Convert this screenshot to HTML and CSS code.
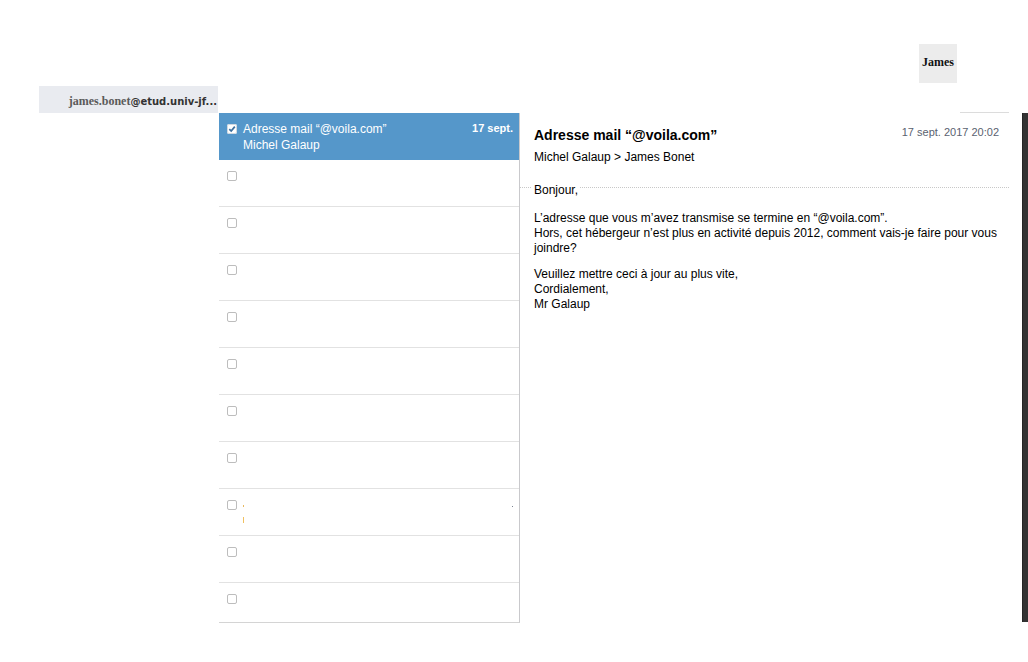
FILE: index.html
```html
<!DOCTYPE html>
<html lang="fr">
<head>
<meta charset="utf-8">
<title>Messagerie</title>
<link rel="stylesheet" href="styles.css">
</head>
<body>
<div class="app">
  <header class="topbar">
    <div class="user-badge">James</div>
  </header>
  <div class="account-row">
    <div class="account"><span class="acc-name">james.bonet</span><span class="acc-domain">@etud.univ-jf...</span></div>
    <div class="top-rule"></div>
  </div>
  <main class="main">
    <div class="gutter"></div>
    <section class="list">
      <div class="row selected">
        <span class="check checked"><svg width="10" height="10" viewBox="0 0 10 10"><rect x="0.5" y="0.5" width="9" height="9" rx="1.5" fill="#fff" stroke="#d0d8e0"/><path d="M2.3 5.2 L4.2 7.1 L7.8 2.6" fill="none" stroke="#3d6f9e" stroke-width="1.7"/></svg></span>
        <div class="row-text">
          <div class="subject">Adresse mail “@voila.com”</div>
          <div class="from">Michel Galaup</div>
        </div>
        <div class="row-date">17 sept.</div>
      </div>
      <div class="row"><span class="check"></span></div>
      <div class="row"><span class="check"></span></div>
      <div class="row"><span class="check"></span></div>
      <div class="row"><span class="check"></span></div>
      <div class="row"><span class="check"></span></div>
      <div class="row"><span class="check"></span></div>
      <div class="row"><span class="check"></span></div>
      <div class="row"><span class="check"></span><div class="row-text"><div class="marks"><span class="dot"></span><span class="grey-dot"></span></div><div class="marks"><span class="bar"></span></div></div></div>
      <div class="row"><span class="check"></span></div>
      <div class="row"><span class="check"></span></div>
    </section>
    <article class="reader">
      <div class="reader-head">
        <h1 class="title">Adresse mail “@voila.com”</h1>
        <div class="date">17 sept. 2017 20:02</div>
      </div>
      <div class="people">Michel Galaup &gt; James Bonet</div>
      <fieldset class="body">
        <legend>Bonjour,</legend>
        <p class="first">L’adresse que vous m’avez transmise se termine en “@voila.com”.<br>Hors, cet hébergeur n’est plus en activité depuis 2012, comment vais-je faire pour vous joindre?</p>
        <p>Veuillez mettre ceci à jour au plus vite,<br>Cordialement,<br>Mr Galaup</p>
      </fieldset>
    </article>
    <div class="scrollbar"></div>
  </main>
</div>
</body>
</html>
```

FILE: styles.css
```css
html, body {
  margin: 0;
  padding: 0;
  background: #fff;
}
body {
  width: 1028px;
  height: 662px;
  overflow: hidden;
  font-family: "Liberation Sans", Arial, sans-serif;
  color: #000;
}
.topbar {
  height: 86px;
  box-sizing: border-box;
  padding: 44px 71px 0 0;
  display: flex;
  justify-content: flex-end;
}
.user-badge {
  width: 38px;
  height: 39px;
  background: #ececec;
  font-family: "Liberation Serif", "Times New Roman", serif;
  font-weight: bold;
  font-size: 12px;
  display: flex;
  align-items: center;
  justify-content: center;
  padding-bottom: 2px;
  box-sizing: border-box;
  color: #111;
}
.account-row {
  height: 27px;
  display: flex;
}
.account {
  margin-left: 39px;
  width: 179px;
  height: 27px;
  background: #e9ebf0;
  display: flex;
  align-items: center;
  justify-content: flex-end;
  padding-top: 3px;
  box-sizing: border-box;
  white-space: nowrap;
}
.acc-name {
  font-family: "Liberation Serif", "Times New Roman", serif;
  font-weight: bold;
  font-size: 12px;
  color: #5a5a5a;
}
.acc-domain {
  font-family: "DejaVu Sans", Verdana, sans-serif;
  font-weight: bold;
  font-size: 10px;
  color: #333;
  margin-right: 1px;
}
.top-rule {
  margin-left: auto;
  margin-right: 19px;
  width: 49px;
  height: 1px;
  background: #dcdcdc;
  align-self: flex-end;
}
.main {
  display: flex;
  height: 510px;
}
.gutter {
  width: 219px;
  flex: none;
}
.list {
  width: 300px;
  flex: none;
  border-right: 1px solid #c9c9cc;
  border-bottom: 1px solid #d4d4d4;
  overflow: hidden;
  box-sizing: content-box;
  height: 509px;
}
.row {
  height: 47px;
  box-sizing: border-box;
  border-bottom: 1px solid #e2e2e2;
  display: flex;
  align-items: flex-start;
  padding: 11px 6px 0 8px;
}
.row .check {
  width: 10px;
  height: 10px;
  box-sizing: border-box;
  border: 1px solid #bdbdbd;
  border-radius: 2px;
  background: #fff;
  flex: none;
  margin-right: 6px;
}
.row.selected {
  background: #5597ca;
  border-bottom-color: #5597ca;
  padding-top: 8px;
  color: #fff;
}
.row.selected .check {
  border: none;
  margin-top: 3px;
  display: block;
}
.row.selected .check svg {
  display: block;
}
.row-text {
  flex: 1;
  font-size: 12px;
  line-height: 16px;
}
.row-date {
  font-size: 11px;
  font-weight: bold;
  line-height: 14px;
  flex: none;
}
.marks {
  height: 12px;
  display: flex;
  align-items: center;
}
.dot {
  width: 1px;
  height: 2px;
  background: #e8b860;
}
.grey-dot {
  width: 1px;
  height: 1px;
  background: #7a8290;
  margin-left: auto;
}
.bar {
  width: 1px;
  height: 6px;
  background: #f0c060;
  margin-top: 4px;
}
.reader {
  width: 502px;
  flex: none;
  background: #fff;
}
.reader-head {
  display: flex;
  justify-content: space-between;
  align-items: flex-start;
  padding: 12px 23px 0 14px;
}
.title {
  margin: 1px 0 0;
  font-size: 14px;
  line-height: 18px;
  font-weight: bold;
}
.date {
  font-size: 11px;
  line-height: 14px;
  color: #5a6270;
}
.people {
  padding-left: 14px;
  margin-top: 6px;
  font-size: 12px;
  line-height: 15px;
}
.body {
  margin: 11px 13px 0 0;
  padding: 0 0 0 14px;
  border: none;
  border-top: 1px dotted #c8c8c8;
  font-size: 12px;
  line-height: 15px;
  min-width: 0;
}
.body legend {
  padding: 7px 2px 0;
  margin-left: -2px;
  font-size: 12px;
  line-height: 15px;
}
.body p {
  margin: 0 0 11px;
}
.body p.first {
  margin-top: 13px;
}
.scrollbar {
  width: 6px;
  flex: none;
  height: 509px;
  background: #333;
  border-left: 1px solid #252525;
  box-sizing: border-box;
}
```
